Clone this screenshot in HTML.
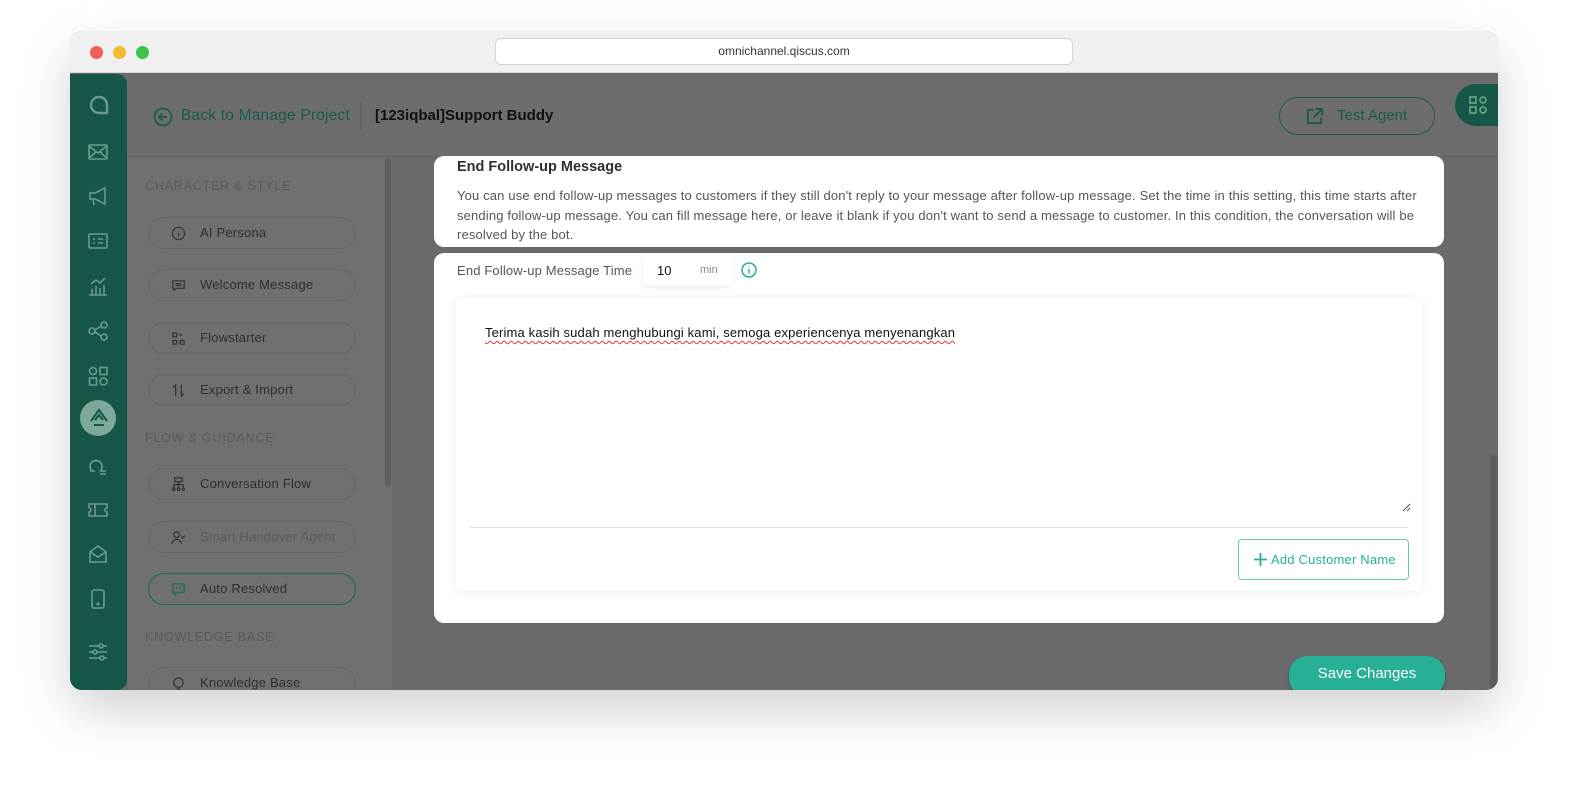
<!DOCTYPE html>
<html><head><style>
*{margin:0;padding:0;box-sizing:border-box}
body{width:1580px;height:804px;background:#fff;font-family:"Liberation Sans",Arial,sans-serif;position:relative;overflow:hidden}
.win{position:absolute;left:70px;top:31px;width:1428px;height:659px;border-radius:12px;overflow:hidden;box-shadow:0 20px 50px rgba(0,0,0,.18);background:#6a6a6a}
.tb{position:absolute;left:0;top:0;width:100%;height:42px;background:#f0f0f0;border-bottom:1px solid #d8d8d8}
.dot{position:absolute;top:15px;width:13px;height:13px;border-radius:50%}
.url{position:absolute;left:425px;top:7px;width:578px;height:27px;background:#fff;border:1px solid #d4d4d4;border-radius:6px;text-align:center;font-size:12px;line-height:25px;color:#333}
.side{position:absolute;left:0;top:43px;width:57px;height:616px;background:#17574a;border-radius:0 10px 10px 0}
.side svg{position:absolute;left:17px}
.hdr{position:absolute;left:57px;top:43px;right:0;height:83px;background:#6d6d6d;border-bottom:1px solid #646464}
.menu{position:absolute;left:58px;top:127px;width:264px;height:532px;background:#707070}
.sec{position:absolute;left:75px;font-size:12.5px;color:#5a5a5a;letter-spacing:.8px}
.it{position:absolute;left:78px;width:208px;height:32px;border:1px solid #666;border-radius:16px;font-size:13px;letter-spacing:.2px;color:#2f2f2f;line-height:30px;padding-left:51px}
.it svg{position:absolute;left:22px;top:8px}
.card{position:absolute;background:#fff;border-radius:10px}
</style></head><body>
<div class="win">
<div class="tb">
<div class="dot" style="left:20px;background:#ee5e57"></div>
<div class="dot" style="left:43px;background:#f4bb2e"></div>
<div class="dot" style="left:66px;background:#3fc44a"></div>
<div class="url">omnichannel.qiscus.com</div>
</div>
<div class="hdr">
<svg style="position:absolute;left:26px;top:33px" width="20" height="20" viewBox="0 0 20 20" fill="none" stroke="#1a5a4c" stroke-width="1.8"><circle cx="10" cy="10" r="8.5"/><path d="M14 10H6M9.5 6.5L6 10l3.5 3.5"/></svg>
<div style="position:absolute;left:54px;top:33px;font-size:15.5px;letter-spacing:.2px;color:#1a5a4c">Back to Manage Project</div>
<div style="position:absolute;left:233px;top:28px;width:1px;height:28px;background:#5f5f5f"></div>
<div style="position:absolute;left:248px;top:33px;font-size:15px;font-weight:bold;color:#111">[123iqbal]Support Buddy</div>
<div style="position:absolute;left:1152px;top:23px;width:156px;height:38px;border:1px solid #1a5a4c;border-radius:19px;font-size:15px;color:#1a5a4c;line-height:36px;padding-left:57px">Test Agent
<svg style="position:absolute;left:25px;top:9px" width="19" height="19" viewBox="0 0 20 20" fill="none" stroke="#1a5a4c" stroke-width="2"><path d="M9 3H3v14h14v-6M11 2h7v7M18 2L9 11"/></svg></div>
<div style="position:absolute;left:1328px;top:10px;width:60px;height:42px;border-radius:21px 0 0 21px;background:#17574a">
<svg style="position:absolute;left:13px;top:11px" width="20" height="20" viewBox="0 0 20 20" fill="none" stroke="#6a8" stroke-width="1.6"><rect x="2" y="2" width="6" height="6"/><circle cx="15" cy="5" r="3"/><rect x="2" y="12" width="6" height="6"/><circle cx="15" cy="15" r="3"/></svg></div>
</div>
<div class="side">
<svg style="top:19px" width="24" height="24" viewBox="0 0 24 24" fill="none" stroke="#6d9a8e" stroke-width="2.4"><path d="M4 12a8 8 0 0 1 8-8h0a8 8 0 0 1 8 8v8h-8a8 8 0 0 1-8-8z"/></svg>
<svg style="top:67px" width="22" height="22" viewBox="0 0 22 22" fill="none" stroke="#6d9a8e" stroke-width="1.6"><rect x="2" y="4" width="18" height="14" rx="1"/><path d="M2 5l9 7 9-7M2 17l7-6M20 17l-7-6"/></svg>
<svg style="top:111px" width="22" height="22" viewBox="0 0 22 22" fill="none" stroke="#6d9a8e" stroke-width="1.6"><path d="M3 8h5l10-5v16L8 14H3zM6 14l1 6"/></svg>
<svg style="top:156px" width="22" height="22" viewBox="0 0 22 22" fill="none" stroke="#6d9a8e" stroke-width="1.6"><rect x="2" y="4" width="18" height="14" rx="1"/><path d="M6 9h2M6 13h2M11 9h5M11 13h5"/></svg>
<svg style="top:201px" width="22" height="22" viewBox="0 0 22 22" fill="none" stroke="#6d9a8e" stroke-width="1.6"><path d="M2 20h18M5 20v-6M9 20v-9M13 20v-7M17 20v-10M4 9l5-4 4 3 5-5"/></svg>
<svg style="top:246px" width="22" height="22" viewBox="0 0 22 22" fill="none" stroke="#6d9a8e" stroke-width="1.6"><circle cx="5" cy="11" r="3"/><circle cx="17" cy="5" r="3"/><circle cx="17" cy="17" r="3"/><path d="M8 10l6-4M8 12l6 4"/></svg>
<svg style="top:291px" width="22" height="22" viewBox="0 0 22 22" fill="none" stroke="#6d9a8e" stroke-width="1.6"><circle cx="6" cy="6" r="3.5"/><rect x="13" y="2.5" width="7" height="7"/><rect x="2.5" y="13" width="7" height="7"/><circle cx="16.5" cy="16.5" r="3.5"/></svg>
<div style="position:absolute;left:10px;top:326px;width:36px;height:36px;border-radius:50%;background:#7da89c"></div>
<svg style="top:333px;left:18px" width="22" height="22" viewBox="0 0 22 22" fill="none" stroke="#17574a" stroke-width="2"><path d="M3 14L11 3l8 11M7 13l4-5 4 5M6 18h10"/></svg>
<svg style="top:380px" width="22" height="22" viewBox="0 0 22 22" fill="none" stroke="#6d9a8e" stroke-width="1.6"><path d="M5 17a6 6 0 1 1 8 0M3 17h5M13 17h6M13 20h6"/></svg>
<svg style="top:425px" width="22" height="22" viewBox="0 0 22 22" fill="none" stroke="#6d9a8e" stroke-width="1.6"><path d="M2 5h18v4a2 2 0 0 0 0 4v4H2v-4a2 2 0 0 0 0-4zM8 5v12"/></svg>
<svg style="top:469px" width="22" height="22" viewBox="0 0 22 22" fill="none" stroke="#6d9a8e" stroke-width="1.6"><path d="M3 9l8-6 8 6v10H3zM3 9l8 5 8-5"/></svg>
<svg style="top:514px" width="22" height="22" viewBox="0 0 22 22" fill="none" stroke="#6d9a8e" stroke-width="1.6"><rect x="5" y="2" width="12" height="18" rx="2"/><circle cx="11" cy="16" r=".8"/></svg>
<svg style="top:567px" width="22" height="22" viewBox="0 0 22 22" fill="none" stroke="#6d9a8e" stroke-width="1.6"><path d="M2 5h18M2 11h18M2 17h18"/><circle cx="14" cy="5" r="2" fill="#17574a"/><circle cx="8" cy="11" r="2" fill="#17574a"/><circle cx="15" cy="17" r="2" fill="#17574a"/></svg>
</div>
<div class="menu"></div>
<div style="position:absolute;left:315px;top:127px;width:6px;height:328px;border-radius:3px;background:#5f5f5f"></div>
<div style="position:absolute;left:1420px;top:424px;width:7px;height:235px;background:#5c5c5c"></div>
<div class="sec" style="top:148px">CHARACTER &amp; STYLE</div>
<div class="it" style="top:186px"><svg width="15" height="15" viewBox="0 0 16 16" fill="none" stroke="#333" stroke-width="1.3"><circle cx="8" cy="8" r="6.5"/><path d="M8 7v4M8 5v.5"/></svg>AI Persona</div>
<div class="it" style="top:238px"><svg width="15" height="15" viewBox="0 0 16 16" fill="none" stroke="#333" stroke-width="1.3"><path d="M2 3h12v8H6l-3 2v-2H2zM5 6h6M5 8h6"/></svg>Welcome Message</div>
<div class="it" style="top:291px"><svg width="15" height="15" viewBox="0 0 16 16" fill="none" stroke="#333" stroke-width="1.3"><rect x="2" y="2" width="4" height="4"/><rect x="2" y="10" width="4" height="4"/><rect x="10" y="10" width="4" height="4"/><path d="M8 4h4M8 12h1"/></svg>Flowstarter</div>
<div class="it" style="top:343px"><svg width="15" height="15" viewBox="0 0 16 16" fill="none" stroke="#333" stroke-width="1.4"><path d="M5 14V2L2 5M11 2v12l3-3"/></svg>Export &amp; Import</div>
<div class="sec" style="top:400px">FLOW &amp; GUIDANCE</div>
<div class="it" style="top:437px"><svg width="15" height="15" viewBox="0 0 16 16" fill="none" stroke="#333" stroke-width="1.3"><rect x="4" y="1" width="8" height="4"/><path d="M8 5v3M3 8h10M3 8v4M8 8v4M13 8v4"/><circle cx="3" cy="13" r="1.3"/><circle cx="8" cy="13" r="1.3"/><circle cx="13" cy="13" r="1.3"/></svg>Conversation Flow</div>
<div class="it" style="top:490px;color:#5a5a5a"><svg width="15" height="15" viewBox="0 0 16 16" fill="none" stroke="#333" stroke-width="1.3"><circle cx="6" cy="5" r="3"/><path d="M1 15a5 5 0 0 1 10 0M11 7l1.5 1.5L15 6"/></svg>Smart Handover Agent</div>
<div class="it" style="top:542px;border-color:#1a6a58"><svg width="15" height="15" viewBox="0 0 16 16" fill="none" stroke="#1a6a58" stroke-width="1.3"><path d="M2 2h12v9H7l-3 3v-3H2zM6 5v3M10 5v3M8 5v.5"/></svg>Auto Resolved</div>
<div class="sec" style="top:599px">KNOWLEDGE BASE</div>
<div class="it" style="top:636px"><svg width="15" height="15" viewBox="0 0 16 16" fill="none" stroke="#333" stroke-width="1.3"><circle cx="8" cy="7" r="5"/><path d="M6 14h4"/></svg>Knowledge Base</div>

<div class="card" style="left:364px;top:125px;width:1010px;height:91px">
<div style="position:absolute;left:23px;top:3px;font-size:14.5px;font-weight:bold;color:#2f2f2f">End Follow-up Message</div>
<div style="position:absolute;left:23px;top:30px;width:970px;font-size:13px;letter-spacing:.15px;line-height:19.5px;color:#555">You can use end follow-up messages to customers if they still don't reply to your message after follow-up message. Set the time in this setting, this time starts after sending follow-up message. You can fill message here, or leave it blank if you don't want to send a message to customer. In this condition, the conversation will be resolved by the bot.</div>
</div>
<div class="card" style="left:364px;top:222px;width:1010px;height:370px">
<div style="position:absolute;left:23px;top:10px;font-size:13px;letter-spacing:.15px;color:#555">End Follow-up Message Time</div>
<div style="position:absolute;left:209px;top:1px;width:90px;height:32px;border-radius:6px;box-shadow:0 2px 6px rgba(0,0,0,.08);font-size:13px;color:#111">
<span style="position:absolute;left:14px;top:9px">10</span><span style="position:absolute;left:57px;top:10px;font-size:11px;color:#888">min</span></div>
<svg style="position:absolute;left:307px;top:9px" width="16" height="16" viewBox="0 0 16 16" fill="none" stroke="#27b096" stroke-width="1.5"><circle cx="8" cy="8" r="7"/><path d="M8 7v4.5M8 4.5v.5"/></svg>
<div style="position:absolute;left:22px;top:45px;width:966px;height:293px;background:#fff;border-radius:6px;box-shadow:0 1px 10px rgba(0,0,0,.08)">
<div style="position:absolute;left:29px;top:27px;font-size:13px;letter-spacing:.15px;color:#111;text-decoration:underline wavy #e33;text-decoration-thickness:1px;text-underline-offset:3px">Terima kasih sudah menghubungi kami, semoga experiencenya menyenangkan</div>
<svg style="position:absolute;left:945px;top:204px" width="10" height="10" viewBox="0 0 10 10" stroke="#555"><path d="M2 9L9 2M6 9l3-3"/></svg>
<div style="position:absolute;left:14px;top:229px;width:938px;height:1px;background:#ddd"></div>
<div style="position:absolute;left:782px;top:241px;width:171px;height:41px;border:1px solid #6cc9b5;border-radius:4px;font-size:13px;letter-spacing:.2px;color:#27b096;line-height:39px;padding-left:32px">Add Customer Name
<svg style="position:absolute;left:14px;top:12px" width="15" height="15" viewBox="0 0 15 15" stroke="#27b096" stroke-width="1.8"><path d="M7.5 1v13M1 7.5h13"/></svg></div>
</div>
</div>
<div style="position:absolute;left:1219px;top:625px;width:156px;height:40px;border-radius:18px;background:#27b096;color:#fff;font-size:15px;text-align:center;line-height:36px;box-shadow:0 2px 3px rgba(0,0,0,.3)">Save Changes</div>
</div>
</body></html>
